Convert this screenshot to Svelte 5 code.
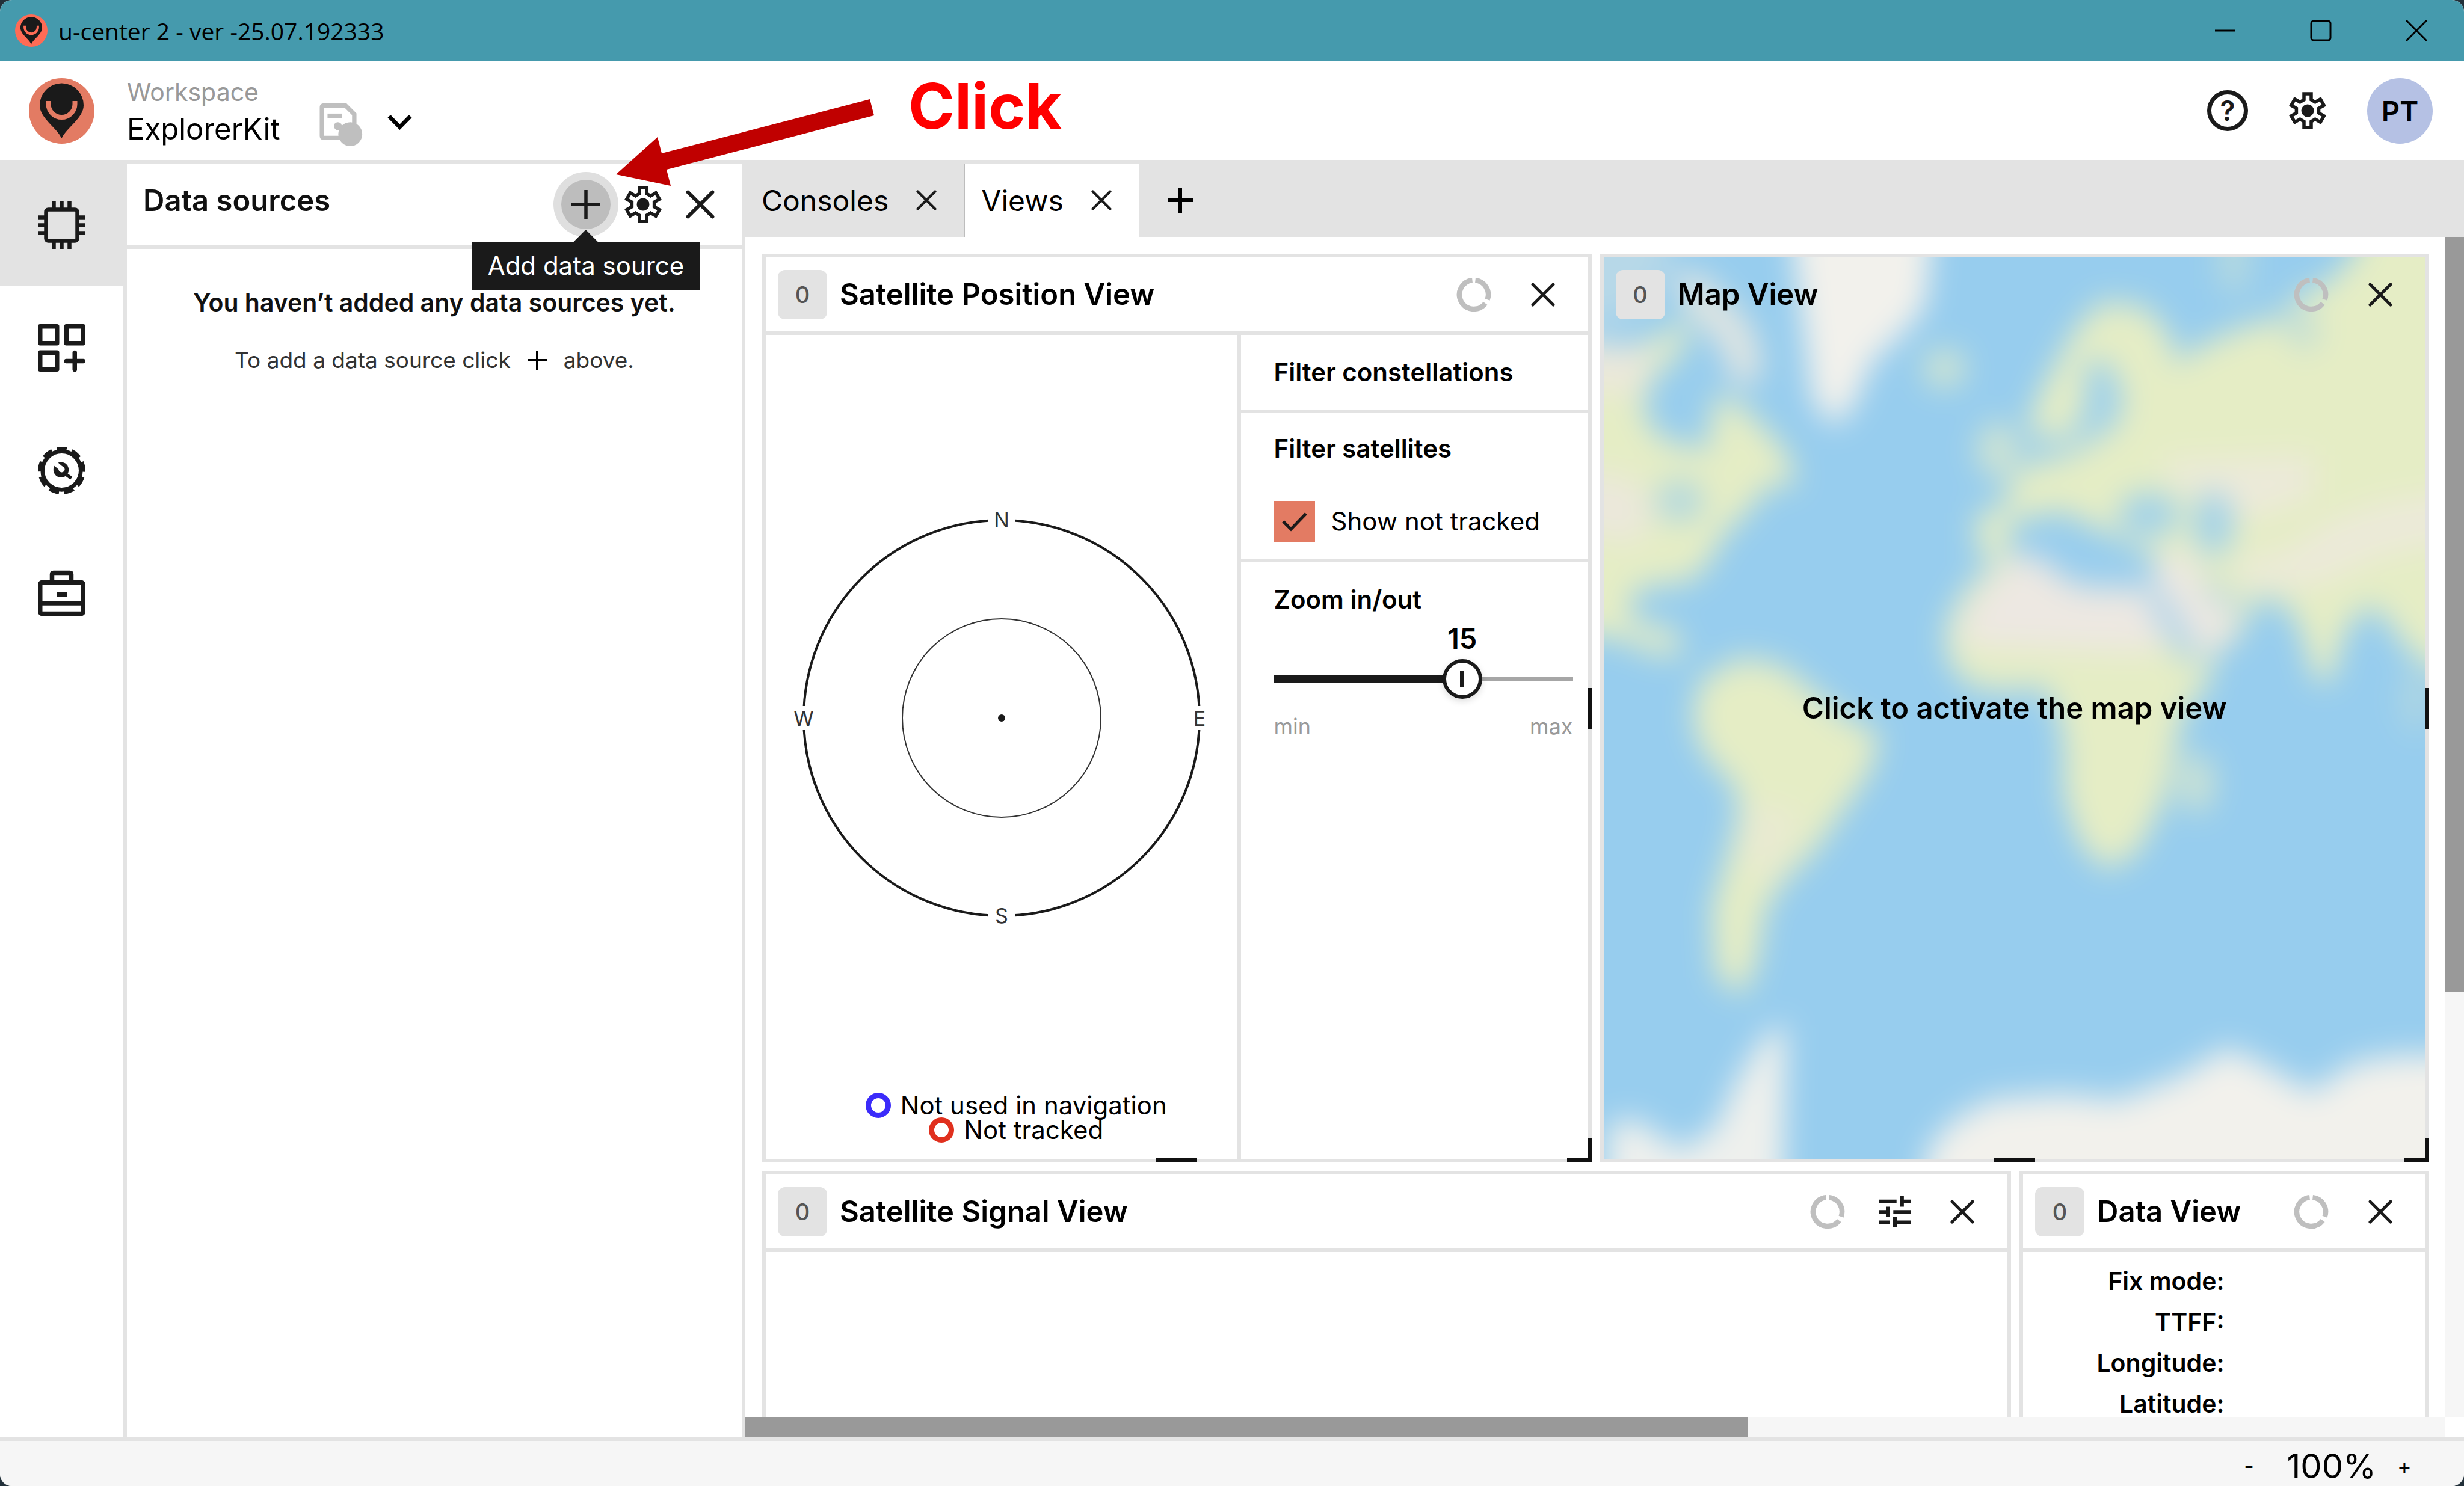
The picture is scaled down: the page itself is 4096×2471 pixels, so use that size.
<script>
  let zoom = $state(15);
  let showNotTracked = $state(true);
  let pageZoom = $state(100);
  const zoomMin = 2;
  const zoomMax = 22;
  let zoomRatio = $derived((zoom - zoomMin) / (zoomMax - zoomMin));

  const dataRows = ['Fix mode:', 'TTFF:', 'Longitude:', 'Latitude:'];

  function polar(r, deg, cx, cy) {
    const a = (deg * Math.PI) / 180;
    return `${(cx + r * Math.sin(a)).toFixed(2)} ${(cy - r * Math.cos(a)).toFixed(2)}`;
  }

  // Six-toothed cog outline on a 62-unit box.
  const cogPath = (() => {
    const points = [];
    for (let k = 0; k < 6; k++) {
      const a = (k * Math.PI) / 3;
      for (const [x, y] of [[-6, -18], [-6, -28], [6, -28], [6, -18]]) {
        points.push(`${(31 + x * Math.cos(a) - y * Math.sin(a)).toFixed(2)} ${(31 + x * Math.sin(a) + y * Math.cos(a)).toFixed(2)}`);
      }
    }
    return 'M' + points.join('L') + 'Z';
  })();

  const ringPath =
    `M${polar(24, 6, 29, 29)}A24 24 0 0 1 ${polar(24, 110, 29, 29)}` +
    `M${polar(24, 127, 29, 29)}A24 24 0 1 1 ${polar(24, 354, 29, 29)}`;
</script>

{#snippet logo(color)}
  <svg class="logo" viewBox="0 0 109 109" aria-hidden="true">
    <circle cx="54.5" cy="54.5" r="54.5" fill={color} />
    <path d="M54.5 100C46 82 18 66 18 45A36.5 36.5 0 0 1 91 45C91 66 63 82 54.5 100Z" fill="#1a1a1a" />
    <path d="M32.5 38V43A22 22 0 0 0 76.5 43V38" fill="none" stroke={color} stroke-width="8" />
  </svg>
{/snippet}

{#snippet cross(cls)}
  <svg class={cls} viewBox="0 0 40 40" fill="none" stroke="#1a1a1a" stroke-width="5" stroke-linecap="round" aria-hidden="true">
    <path d="M3 3L37 37M37 3L3 37" />
  </svg>
{/snippet}

{#snippet cog()}
  <svg class="cog" viewBox="0 0 62 62" aria-hidden="true">
    <path d={cogPath} fill="none" stroke="#1a1a1a" stroke-width="5.5" />
    <circle cx="31" cy="31" r="10.5" fill="#1a1a1a" />
  </svg>
{/snippet}

{#snippet cardHeader(title, hasSettings)}
  <header class="card-head">
    <span class="badge">0</span>
    <h2>{title}</h2>
    <div class="tools">
      <svg class="ring" viewBox="0 0 58 58" fill="none" stroke="#bfbfbf" stroke-width="8.5" aria-hidden="true"><path d={ringPath} /></svg>
      {#if hasSettings}
        <button aria-label="Chart settings">
          <svg class="sliders" viewBox="393 97 154 154" fill="none" stroke="#1a1a1a" stroke-width="18" aria-hidden="true">
            <path d="M393 123H478M505 97V149M505 123H547M393 175H436M436 149V200M462 175H547M393 226H445M470 200V251M470 226H547" />
          </svg>
        </button>
      {/if}
      <button class="tool-close" aria-label="Close {title}">{@render cross('x-card')}</button>
    </div>
  </header>
{/snippet}

{#snippet handles()}
  <i class="handle right"></i>
  <i class="handle bottom"></i>
  <i class="handle corner"></i>
{/snippet}

<div class="window">
  <div class="titlebar">
    {@render logo('#ff6b55')}
    <span>u-center 2 - ver -25.07.192333</span>
    <div class="controls">
      <button aria-label="Minimize"><svg viewBox="0 0 36 36"><path d="M1 18H35" /></svg></button>
      <button aria-label="Maximize"><svg viewBox="0 0 36 36"><rect x="2" y="2" width="32" height="32" rx="4" /></svg></button>
      <button aria-label="Close window"><svg viewBox="0 0 36 36"><path d="M1 1L35 35M35 1L1 35" /></svg></button>
    </div>
  </div>

  <header class="appbar">
    {@render logo('#e37b63')}
    <div class="workspace">
      <span class="muted">Workspace</span>
      <span class="name">ExplorerKit</span>
    </div>
    <div class="workspace-tools">
      <button aria-label="Save workspace">
        <svg class="save" viewBox="38 68 216 220" aria-hidden="true">
          <path d="M150 244H60Q50 244 50 233V91Q50 81 60 81H168L212 125V175" fill="none" stroke="#bfbfbf" stroke-width="22" />
          <path d="M78 133H152" stroke="#bfbfbf" stroke-width="22" />
          <path d="M130 185L150 200" stroke="#bfbfbf" stroke-width="22" />
          <circle cx="130" cy="185" r="20" fill="#bfbfbf" />
          <circle cx="192" cy="225" r="60" fill="#bfbfbf" />
        </svg>
      </button>
      <button aria-label="Choose workspace">
        <svg class="chevron" viewBox="376 120 122 78" fill="none" stroke="#000" stroke-width="20" aria-hidden="true"><path d="M384 130L437 184L490 130" /></svg>
      </button>
    </div>
    <div class="account">
      <button aria-label="Help">
        <svg class="help" viewBox="0 0 68 68" aria-hidden="true">
          <circle cx="34" cy="34" r="30.5" fill="none" stroke="#1a1a1a" stroke-width="7" />
          <text x="34" y="51" text-anchor="middle">?</text>
        </svg>
      </button>
      <button aria-label="Settings">{@render cog()}</button>
      <button class="avatar">PT</button>
    </div>
  </header>

  <div class="main">
    <nav class="rail" aria-label="Sections">
      <button class="active" aria-label="Data sources">
        <svg viewBox="0 0 79 79" fill="none" stroke="#1a1a1a" stroke-width="6.5">
          <rect x="13.5" y="13.5" width="52" height="52" rx="4" />
          <path d="M26.5 0V12M39.5 0V12M52.5 0V12M26.5 67V79M39.5 67V79M52.5 67V79M0 26.5H12M0 39.5H12M0 52.5H12M67 26.5H79M67 39.5H79M67 52.5H79" />
        </svg>
      </button>
      <button aria-label="Add view">
        <svg viewBox="0 0 79 79" fill="none" stroke="#1a1a1a" stroke-width="7.5" stroke-linejoin="round">
          <rect x="3.75" y="3.75" width="28" height="28" /><rect x="47.25" y="3.75" width="28" height="28" /><rect x="3.75" y="47.25" width="28" height="28" />
          <path d="M61.25 47.5V75.5M47.25 61.5H75.25" stroke-linecap="round" />
        </svg>
      </button>
      <button aria-label="Device configuration">
        <svg viewBox="129 13 236 236" fill="none" stroke="#1a1a1a">
          <circle cx="247" cy="131" r="95" stroke-width="20" />
          <circle cx="247" cy="131" r="109" stroke-width="18" stroke-dasharray="50 26.1" stroke-dashoffset="25" transform="rotate(-90 247 131)" />
          <circle cx="244" cy="127" r="38" fill="#1a1a1a" stroke="none" />
          <path d="M262 145L295 169" stroke-width="17" />
          <path d="M204 86L246 122" stroke="#fff" stroke-width="24" />
          <circle cx="247" cy="125" r="15" fill="#fff" stroke="none" />
        </svg>
      </button>
      <button aria-label="Toolbox">
        <svg viewBox="0 -2 79 79" fill="none" stroke="#1a1a1a" stroke-width="7.5">
          <rect x="3.75" y="19.5" width="71.5" height="52" rx="3" />
          <path d="M23.5 19V6Q23.5 3.5 26 3.5H53Q55.5 3.5 55.5 6V19M4 54H75M31 39.5H48" />
        </svg>
      </button>
    </nav>

    <aside class="sources">
      <div class="sources-head">
        <h1>Data sources</h1>
        <div class="add-wrap">
          <button class="add" aria-label="Add data source" aria-describedby="add-tip">
            <svg viewBox="0 0 48 48" fill="none" stroke="#1a1a1a" stroke-width="5.5"><path d="M24 0V48M0 24H48" /></svg>
          </button>
          <span class="tip" role="tooltip" id="add-tip">Add data source</span>
        </div>
        <button aria-label="Data source settings">{@render cog()}</button>
        <button aria-label="Close data sources">{@render cross('x-panel')}</button>
      </div>
      <div class="empty">
        <strong>You haven’t added any data sources yet.</strong>
        <p>To add a data source click
          <svg viewBox="0 0 32 32" stroke="#000" stroke-width="4" role="img" aria-label="plus"><path d="M16 0V32M0 16H32" /></svg>
          above.</p>
      </div>
    </aside>

    <section class="views">
      <div class="tabs">
        <div class="tab"><a href="#consoles">Consoles</a><button aria-label="Close Consoles">{@render cross('x-tab')}</button></div>
        <div class="tab current"><a href="#views">Views</a><button aria-label="Close Views">{@render cross('x-tab')}</button></div>
        <button class="new-tab" aria-label="New tab"><svg viewBox="0 0 42 42" stroke="#000" stroke-width="6"><path d="M21 0V42M0 21H42" /></svg></button>
      </div>

      <div class="canvas">
        <div class="row top">
          <article class="card">
            {@render cardHeader('Satellite Position View', false)}
            <div class="position">
              <div class="sky">
                <div class="plot">
                  <svg viewBox="0 0 716 716" role="img" aria-label="Sky plot">
                    <circle cx="358" cy="358" r="329" fill="none" stroke="#1a1a1a" stroke-width="4" />
                    <circle cx="358" cy="358" r="165" fill="none" stroke="#333" stroke-width="2" />
                    <circle cx="358" cy="358" r="6" fill="#1a1a1a" />
                    <g fill="#fff"><rect x="336" y="8" width="44" height="42" /><rect x="336" y="666" width="44" height="42" /><rect x="8" y="338" width="42" height="40" /><rect x="666" y="338" width="42" height="40" /></g>
                    <g class="compass" text-anchor="middle"><text x="358" y="41">N</text><text x="358" y="699">S</text><text x="29" y="371">W</text><text x="687" y="371">E</text></g>
                  </svg>
                </div>
                <ul class="legend">
                  <li><i class="dot unused"></i>Not used in navigation</li>
                  <li><i class="dot untracked"></i>Not tracked</li>
                </ul>
              </div>
              <div class="filters">
                <section><h3>Filter constellations</h3></section>
                <section class="sats">
                  <h3>Filter satellites</h3>
                  <label class="check">
                    <span class="box">
                      <input type="checkbox" bind:checked={showNotTracked} />
                      {#if showNotTracked}<svg viewBox="0 0 68 68" fill="none" stroke="#1a1a1a" stroke-width="5"><path d="M15 34L28 47L53 21" /></svg>{/if}
                    </span>
                    Show not tracked
                  </label>
                </section>
                <section class="zoom" style="--ratio: {zoomRatio}">
                  <h3><label for="zoom">Zoom in/out</label></h3>
                  <div class="value"><output for="zoom">{zoom}</output></div>
                  <input id="zoom" type="range" min={zoomMin} max={zoomMax} bind:value={zoom} />
                  <div class="ends"><span>min</span><span>max</span></div>
                </section>
              </div>
            </div>
            {@render handles()}
          </article>

          <article class="card map-card">
            <svg class="map" viewBox="32 29 1467 1510" preserveAspectRatio="none" aria-hidden="true">
              <defs>
                <filter id="soft" x="-10%" y="-10%" width="120%" height="120%" color-interpolation-filters="sRGB"><feGaussianBlur stdDeviation="26" /></filter>
              </defs>
              <rect x="-60" y="-60" width="1700" height="1700" fill="#97cdee" />
              <g filter="url(#soft)">
                <rect x="-60" y="-60" width="1700" height="1760" fill="#97cdee" />
                <path d="M-60 -60H120L160 30L80 130L-60 150Z" fill="#e8e8df" opacity=".4" />
                <path d="M-60 165L60 180L110 170L190 130L170 190L120 230L100 290L140 335L220 350L225 265L270 270L325 320L362 360L378 408L325 412L285 460L250 490L215 548L180 574L110 580L78 600L85 640L150 650L182 690L130 696L70 672L-60 650Z" fill="#e5edc5" />
                <path d="M-60 160L100 180L130 170L90 260L-60 250ZM-60 380L90 400L120 460L90 510L-60 480Z" fill="#ebe8db" />
                <path d="M145 60L205 55L260 105L300 150L318 225L265 250L245 185L185 120Z" fill="#e8e8df" opacity=".9" />
                <ellipse cx="168" cy="437" rx="44" ry="34" fill="#97cdee" opacity=".65" />
                <path d="M360 -60H625L607 110L567 155L510 205L477 280L442 312L404 270L386 130Z" fill="#f2f1ec" />
                <ellipse cx="640" cy="215" rx="40" ry="32" fill="#e4ecc7" opacity=".75" />
                <path d="M1125 -60H1190L1180 90L1130 80Z" fill="#e4ecc7" opacity=".4" />
                <ellipse cx="735" cy="352" rx="40" ry="48" fill="#e4ecc7" opacity=".7" />
                <path d="M790 298L825 228L872 150L920 102L995 110L1044 158L1050 205L1100 175L1180 142L1230 132L1265 95L1320 75L1375 20L1400 -60H1640V720H1510L1460 680L1430 635L1395 612L1355 655L1332 738L1300 738L1276 655L1250 612L1200 598L1165 665L1115 700L1115 740L1062 800L1050 870L1032 940L984 1026L930 1056L881 1012L852 930L853 850L842 790L815 748L760 756L688 750L644 704L642 640L685 573L740 535L696 522L696 458L750 446L756 404L790 374L870 357L900 340L850 332L802 332Z" fill="#e5edc5" />
                <path d="M705 590L770 525L845 535L870 570L1000 570L1020 535L1080 525L1110 600L1155 610L1155 665L1090 700L1040 675L1000 690L680 680L665 650Z" fill="#ede8e2" />
                <path d="M1150 540L1250 520L1330 470L1420 440L1560 420V500L1420 530L1300 580L1180 580ZM1030 370L1300 360L1300 430L1180 470L1030 400Z" fill="#ede8df" opacity=".75" />
                <path d="M762 470L850 454L914 484L960 502L1018 532L1010 582L888 580L840 558L816 532L750 525Z" fill="#97cdee" />
                <path d="M888 210L928 200L958 250L954 302L900 340L862 320L893 280Z" fill="#97cdee" opacity=".9" />
                <ellipse cx="1005" cy="460" rx="55" ry="36" fill="#97cdee" opacity=".9" />
                <ellipse cx="1120" cy="475" rx="36" ry="54" fill="#97cdee" opacity=".85" />
                <path d="M1012 590L1085 705" stroke="#97cdee" stroke-width="34" opacity=".75" />
                <path d="M1105 575L1170 620" stroke="#97cdee" stroke-width="24" opacity=".6" />
                <path d="M1250 120L1300 170" stroke="#97cdee" stroke-width="50" opacity=".45" />
                <ellipse cx="1090" cy="910" rx="32" ry="50" fill="#e4ecc7" opacity=".7" />
                <ellipse cx="1480" cy="770" rx="24" ry="54" fill="#e4ecc7" opacity=".35" />
                <path d="M206 738L275 698L350 712L410 757L464 799L528 829L506 893L454 963L409 1023L354 1074L319 1124L308 1200L282 1266L231 1233L224 1120L253 1030L273 960L265 913L220 873L192 820L194 770Z" fill="#e5edc5" />
                <path d="M290 940L390 960L320 1080L285 1040Z" fill="#ebe8db" opacity=".6" />
                <path d="M600 1700L605 1530L650 1478L720 1440L850 1430L950 1440L1060 1400L1145 1352L1200 1376L1295 1427L1370 1378L1450 1365H1640V1700Z" fill="#f2f1ec" />
                <path d="M38 1700V1480L90 1472L170 1525L232 1485L266 1412L316 1335L358 1312L350 1700Z" fill="#f2f1ec" opacity=".95" />
              </g>
            </svg>
            {@render cardHeader('Map View', false)}
            <button class="activate">Click to activate the map view</button>
            {@render handles()}
          </article>
        </div>

        <div class="row low">
          <article class="card cut">{@render cardHeader('Satellite Signal View', true)}</article>
          <article class="card cut">
            {@render cardHeader('Data View', false)}
            <div class="data">
              <table><tbody>{#each dataRows as label}<tr><th scope="row">{label}</th><td></td></tr>{/each}</tbody></table>
            </div>
          </article>
        </div>
      </div>
      <div class="bar vertical"><i></i></div>
      <div class="bar horizontal"><i></i></div>
    </section>
  </div>

  <footer class="status">
    <button aria-label="Zoom out" onclick={() => (pageZoom -= 10)}>-</button>
    <span>{pageZoom}%</span>
    <button aria-label="Zoom in" onclick={() => (pageZoom += 10)}>+</button>
  </footer>

  <div class="callout">
    <svg viewBox="1026 165 430 145" aria-hidden="true"><path d="M1448 165L1455 192L1110 282L1117 309L1026 290L1095 228L1102 255Z" fill="#c00000" /></svg>
    <span>Click</span>
  </div>
</div>

<style>
  :global(body) { margin: 0; background: #22303a; }
  * { box-sizing: border-box; }
  button { border: 0; padding: 0; margin: 0; background: none; font: inherit; color: inherit; display: flex; align-items: center; justify-content: center; }
  svg { display: block; flex: none; }
  h1, h2, h3, p, ul { margin: 0; padding: 0; }

  .window {
    position: relative;
    height: 100vh;
    display: grid;
    grid-template-rows: 102px 170px minmax(0, 1fr) 81px;
    font-family: Inter, "Liberation Sans", sans-serif;
    font-size: 42px;
    color: #000;
    background: #fff;
    border-radius: 20px;
    overflow: hidden;
  }

  .titlebar { display: flex; align-items: center; gap: 18px; padding-left: 25px; background: #459aad; font: 39px "Open Sans", sans-serif; }
  .titlebar .logo { width: 54px; height: 54px; }
  .controls { display: flex; margin-left: auto; }
  .controls button { width: 159px; height: 102px; }
  .controls svg { width: 36px; height: 36px; fill: none; stroke: #000; stroke-width: 3; }

  .appbar { display: flex; align-items: center; padding: 0 52px 0 48px; border-bottom: 6px solid #e3e3e3; }
  .appbar .logo { width: 109px; height: 109px; margin-right: 54px; }
  .workspace { display: flex; flex-direction: column; line-height: 62px; }
  .muted { color: #999; font-size: 41px; }
  .name { font-size: 49px; }
  .workspace-tools { display: flex; align-items: center; gap: 41px; padding-top: 46px; margin-left: 66px; }
  .save { width: 72px; height: 73px; }
  .chevron { width: 41px; height: 26px; margin-bottom: 8px; }
  .account { display: flex; align-items: center; gap: 68px; margin-left: auto; }
  .help { width: 68px; height: 68px; }
  .help text { font: 600 46px Inter, sans-serif; fill: #1a1a1a; }
  .cog { width: 62px; height: 62px; }
  .avatar { width: 109px; height: 109px; border-radius: 50%; background: #b5c1e4; font-size: 47px; font-weight: 600; }

  .main { display: grid; grid-template: minmax(0, 1fr) / 211px 1028px minmax(0, 1fr); min-height: 0; }
  .rail { border-right: 6px solid #e3e3e3; }
  .rail button { width: 205px; height: 204px; }
  .rail .active { width: 211px; padding-right: 6px; background: #e3e3e3; }
  .rail svg { width: 79px; height: 79px; }

  .sources { border-right: 6px solid #e3e3e3; }
  .sources-head { display: flex; align-items: center; gap: 13px; height: 142px; padding: 0 28px 0 27px; border-bottom: 6px solid #e3e3e3; }
  .sources-head h1 { flex: 1; font-size: 49px; font-weight: 600; padding-bottom: 14px; color: #111; }
  .sources-head button { width: 82px; height: 82px; }
  .x-panel { width: 48px; height: 48px; }
  .add-wrap { position: relative; }
  .sources-head .add { border-radius: 50%; background: #bdbdbd; box-shadow: 0 0 0 13px #dfdfdf; }
  .add svg { width: 48px; height: 48px; }
  .tip { position: absolute; z-index: 2; top: 103px; left: 50%; transform: translateX(-50%); width: max-content; padding: 0 26px; line-height: 80px; font-size: 42px; color: #fff; background: #1a1a1a; }
  .tip::before { content: ""; position: absolute; left: 50%; bottom: 100%; margin-left: -20px; border: 20px solid transparent; border-top-width: 0; border-bottom-color: #1a1a1a; }
  .empty { display: flex; flex-direction: column; align-items: center; gap: 48px; padding-top: 65px; line-height: 48px; color: #111; }
  .empty strong { font-size: 41px; font-weight: 600; }
  .empty p { display: flex; align-items: center; gap: 28px; font-size: 37px; color: #333; }
  .empty svg { width: 32px; height: 32px; }

  .views { display: grid; grid-template: 122px minmax(0, 1fr) 34px / minmax(0, 1fr) 32px; min-height: 0; }
  .tabs { grid-column: 1 / -1; display: flex; align-items: stretch; background: #e3e3e3; font-size: 48px; }
  .tab { display: flex; align-items: center; gap: 46px; padding: 0 45px 0 27px; }
  .tab a { color: inherit; text-decoration: none; }
  .tab.current { background: #fff; border-left: 2px solid #bdbdbd; }
  .x-tab { width: 34px; height: 34px; }
  .new-tab { margin-left: 48px; }
  .new-tab svg { width: 42px; height: 42px; }

  .canvas { display: grid; grid-template-rows: minmax(0, 1511fr) minmax(0, 409fr); gap: 14px; padding: 28px 26px 0 28px; overflow: hidden; }
  .row { display: grid; grid-template-rows: minmax(0, 1fr); gap: 14px; min-height: 0; }
  .top { grid-template-columns: 1fr 1fr; }
  .low { grid-template-columns: 2076fr 681fr; }
  .card { position: relative; display: flex; flex-direction: column; min-width: 0; min-height: 0; border: 6px solid #e3e3e3; background: #fff; }
  .cut { border-bottom: 0; overflow: hidden; }
  .card-head { flex: none; display: flex; align-items: center; gap: 21px; height: 129px; padding: 0 46px 0 20px; border-bottom: 6px solid #e3e3e3; }
  .card-head h2 { font-size: 49px; font-weight: 600; white-space: nowrap; }
  .badge { width: 82px; line-height: 82px; border-radius: 12px; background: #e3e3e3; color: #555; text-align: center; font-size: 38px; font-weight: 500; }
  .tools { display: flex; align-items: center; gap: 57px; margin-left: auto; }
  .ring { width: 58px; height: 58px; }
  .sliders { width: 52px; height: 52px; }
  .tool-close { width: 58px; height: 58px; }
  .x-card { width: 40px; height: 40px; }

  .handle { position: absolute; background: #111; }
  .right { right: -6px; top: 50%; width: 7px; height: 68px; margin-top: -34px; }
  .bottom { bottom: -6px; left: 50%; width: 68px; height: 7px; margin-left: -34px; }
  .corner { right: -6px; bottom: -6px; width: 41px; height: 41px; background: none; border: solid #111; border-width: 0 7px 7px 0; }

  .position { flex: 1; display: grid; grid-template-columns: minmax(0, 1fr) 583px; min-height: 0; }
  .sky { display: flex; flex-direction: column; min-height: 0; padding-bottom: 28px; }
  .plot { flex: 1; display: flex; align-items: center; justify-content: center; padding-top: 14px; min-height: 0; }
  .plot svg { width: 716px; height: 716px; }
  .compass { font: 34px Inter, sans-serif; fill: #333; }
  .legend { list-style: none; padding-left: 49px; line-height: 41px; }
  .legend li { display: flex; align-items: center; justify-content: center; gap: 16px; height: 41px; }
  .dot { width: 42px; height: 42px; border: 9px solid; border-radius: 50%; }
  .unused { border-color: #3b2bfa; }
  .untracked { border-color: #e0301e; }

  .filters { border-left: 6px solid #e3e3e3; }
  .filters section { padding: 38px 25px 38px 55px; border-bottom: 6px solid #e3e3e3; line-height: 48px; }
  .filters section.zoom { border-bottom: 0; }
  .filters section.sats { padding: 35px 25px 28px 55px; }
  .filters h3 { font-size: 42px; font-weight: 600; }
  .check { display: flex; align-items: center; gap: 27px; margin-top: 63px; }
  .box { position: relative; width: 68px; height: 68px; }
  .box input { appearance: none; display: block; width: 68px; height: 68px; margin: 0; border: 4px solid #e37b63; }
  .box input:checked { background: #e37b63; }
  .box svg { position: absolute; inset: 0; pointer-events: none; }
  .value { display: flex; margin: 17px 0 10px; padding-left: calc(33px + (100% - 66px) * var(--ratio)); font-size: 47px; font-weight: 600; }
  .value output { width: 0; display: flex; justify-content: center; }
  .zoom input { appearance: none; display: block; width: 100%; height: 66px; margin: 0; background: none; }
  .zoom input::-webkit-slider-runnable-track {
    height: 66px;
    background:
      linear-gradient(#1a1a1a, #1a1a1a) 0 50% / calc(33px + (100% - 66px) * var(--ratio)) 12px no-repeat,
      linear-gradient(#a6a6a6, #a6a6a6) 0 50% / 100% 6px no-repeat;
  }
  .zoom input::-webkit-slider-thumb { appearance: none; width: 66px; height: 66px; border: 6px solid #1a1a1a; border-radius: 50%; background: linear-gradient(#1a1a1a, #1a1a1a) 50% 50% / 7px 28px no-repeat #fff; box-shadow: 0 4px 12px #0002; }
  .ends { display: flex; justify-content: space-between; margin-top: 22px; font-size: 36px; color: #999; }

  .map { position: absolute; inset: 0; width: 100%; height: 100%; }
  .map-card .card-head { position: relative; z-index: 1; border-color: transparent; }
  .activate { position: absolute; inset: 0; font-size: 49px; font-weight: 600; }
  .data { padding-top: 14px; }
  table { width: 100%; border-collapse: collapse; table-layout: fixed; }
  th { height: 68px; padding: 0; text-align: right; font-size: 41px; font-weight: 600; }

  .bar { background: #f6f6f6; }
  .bar i { display: block; background: #999; }
  .vertical { grid-area: 2 / 2; }
  .vertical i { height: 64%; }
  .horizontal { grid-area: 3 / 1; }
  .horizontal i { height: 100%; width: 59%; }

  .status { display: flex; align-items: center; justify-content: flex-end; gap: 32px; padding: 8px 84px 0 0; border-top: 6px solid #e3e3e3; background: #f6f6f6; font-size: 56px; }
  .status button { width: 30px; font-size: 36px; }
  .status button:first-child { margin-right: 16px; }

  .callout { position: absolute; left: 1024px; top: 124px; display: flex; align-items: flex-start; pointer-events: none; }
  .callout svg { width: 430px; height: 145px; margin-top: 41px; }
  .callout span { margin-left: 56px; font-size: 104px; line-height: 104px; font-weight: 700; color: #f00; }
</style>
